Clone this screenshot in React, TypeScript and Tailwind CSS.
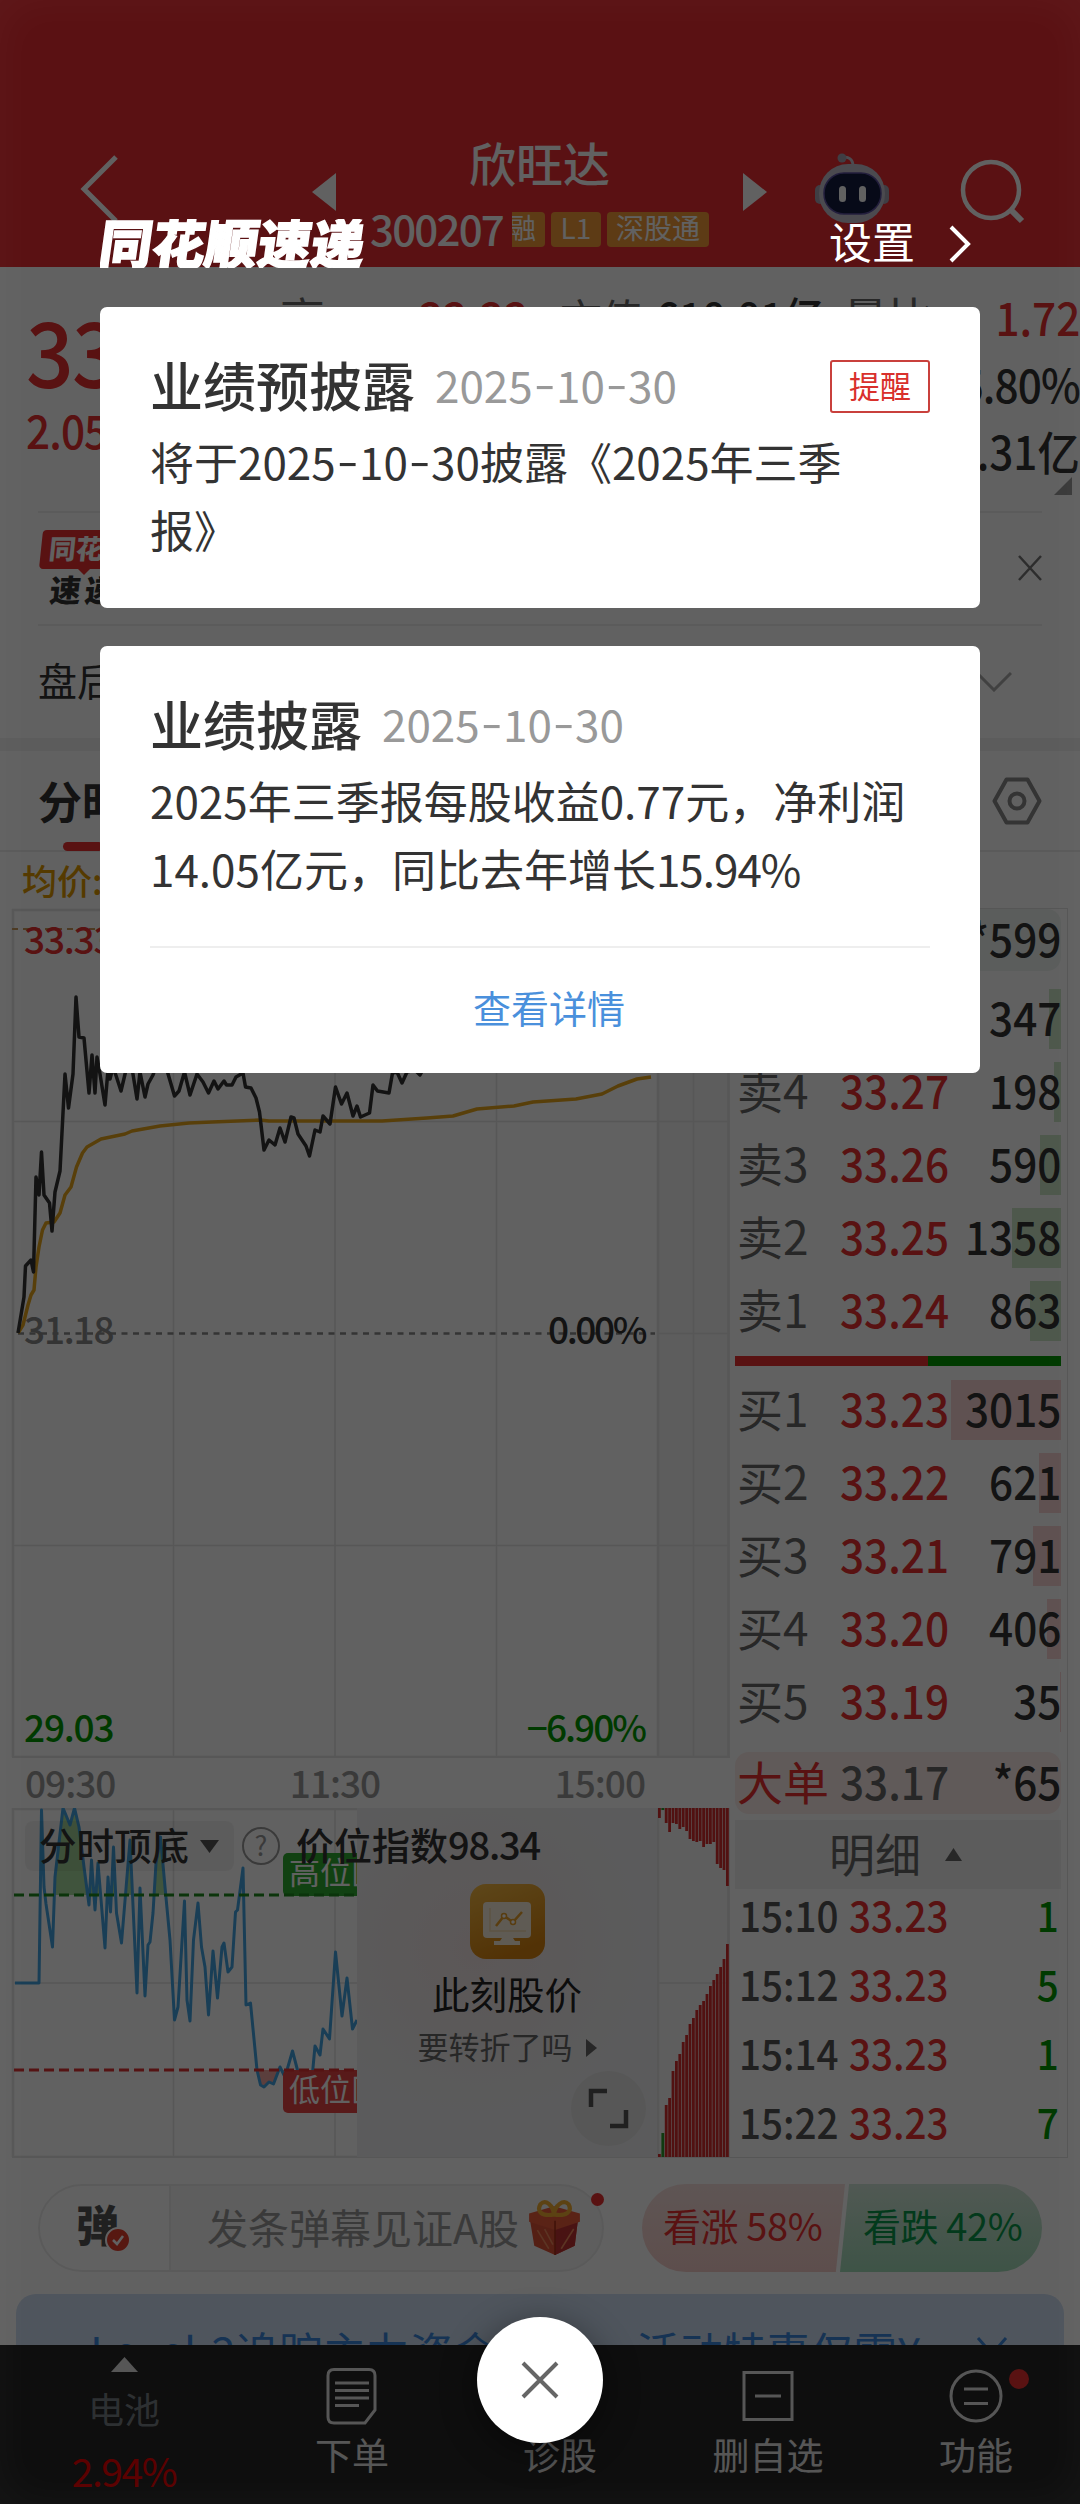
import { Fragment } from 'react';
import type { ReactNode } from 'react';
import clsx from 'clsx';

type Quote = { label: string; price: string; volume: string; bar: number };

const sells: Quote[] = [
  { label: '卖5', price: '33.28', volume: '347', bar: 12 },
  { label: '卖4', price: '33.27', volume: '198', bar: 7 },
  { label: '卖3', price: '33.26', volume: '590', bar: 21 },
  { label: '卖2', price: '33.25', volume: '1358', bar: 49 },
  { label: '卖1', price: '33.24', volume: '863', bar: 31 },
];

const buys: Quote[] = [
  { label: '买1', price: '33.23', volume: '3015', bar: 110 },
  { label: '买2', price: '33.22', volume: '621', bar: 22 },
  { label: '买3', price: '33.21', volume: '791', bar: 28 },
  { label: '买4', price: '33.20', volume: '406', bar: 14 },
  { label: '买5', price: '33.19', volume: '35', bar: 1 },
];

const ticks = [
  { time: '15:10', price: '33.23', volume: '1' },
  { time: '15:12', price: '33.23', volume: '5' },
  { time: '15:14', price: '33.23', volume: '1' },
  { time: '15:22', price: '33.23', volume: '7' },
];

const priceLine =
  '18,1333 24,1297 25.5,1266 31,1260 33.5,1272 36,1177 39,1195 41.5,1152 44,1195 49.5,1203 52,1231 55,1192 60,1171 63,1113 65,1074 68.5,1108 73,1074 76,997 79,1037 84,1038 89,1093 92,1055 95,1093 97,1057 100,1074 105,1105 108,1070 110,1079 113,1067 116.5,1077 121,1091 126,1070 132,1068 137,1099 140,1072 145,1097 148,1084 153,1075 158,1060 167.5,1072 174.5,1096 179,1091 184.5,1072 190,1095 197,1074 203,1082 208.5,1093 214,1081 218,1089 224,1081 226.5,1085 232,1085 236,1077 243,1073 245.5,1087 251,1088 256,1098 259.5,1112 264,1150 269,1140 275,1145 280,1128 285,1142 291,1117 294,1118 298,1134 306,1146 309.5,1156 315,1130 320,1132 323,1116 330,1124 335.5,1087 341.5,1104 347,1093 353,1116 357,1106 360.5,1117 369.5,1113 373,1085 377.5,1091 389,1093 392.5,1073 397,1072 402,1083 407,1072 415,1070 420,1075 425,1066';

const averageLine =
  '18,1333 23,1325 25.5,1315 28,1305 31,1295 34,1290 36,1267 39,1247 42.5,1230 46,1223 54,1222 60,1213 65,1195 71,1187 76.5,1167 82.5,1153 87,1147 101,1139 125,1134 132,1131 160,1126 189,1123 212,1122 260,1120 269,1121 382,1121 427,1118 453,1116 477,1109 514,1106 533,1102 576,1099 602,1094 618,1086 637,1079 651,1077';

const indexLine =
  '15,1983 39,1983 41.5,1810 44,1887 46,1904 52.5,1947 55,1877 63,1808 70,1825 74.5,1808 79,1827 84,1867 89,1905 91.5,1860 95,1910 98,1863 105,1948 108,1877 110.5,1912 113.5,1847 116.5,1913 121.5,1943 130,1840 137,1993 140,1888 145,1996 148,1945 150,1942 153,1913 156,1863 160.5,1837 165,1887 170,1940 174.5,2020 178,2007 184.5,1901 187,2000 190,2021 193.5,1940 198,1903 201.5,1947 205,1967 208.5,2015 213,1951 217.5,1998 222,1947 224,1943 228,1972 232,1967 235.5,1912 237.5,1910 243,1868 246,2005 250.5,2003 257,2070 260.5,2085 264,2087 269,2082 273.5,2084 280,2067 285,2077 292.5,2051 298,2072 307,2080 312.5,2073 315,2046 320,2055 323,2029 329.5,2039 335.5,1952 342,2016 347,1978 352.5,2029 357,2020';

const upperBars = [10, 2, 15, 24, 15, 16, 21, 19, 23, 31, 33, 34, 33, 39, 36, 36, 34, 56, 60, 62, 78];
const lowerBars = [3, 24, 52, 59, 86, 96, 103, 115, 122, 133, 139, 147, 152, 156, 163, 171, 177, 183, 190, 198, 213];

// Condensed figures for prices and volumes
function Num({ className, right, children }: { className?: string; right?: boolean; children: ReactNode }) {
  return (
    <span className={clsx('inline-block scale-x-[0.92] font-medium', right ? 'origin-right' : 'origin-left', className)}>
      {children}
    </span>
  );
}

// --- Header ---

function Robot() {
  return (
    <svg width="76" height="70" viewBox="0 0 76 70" className="mt-[13px] ml-[47px] shrink-0">
      <path d="M28 5C34 3 39 6 39 13" fill="none" stroke="#c9c6d2" strokeWidth="3" />
      <circle cx="28" cy="5" r="4.5" fill="#a5a2b4" />
      <rect x="1" y="32" width="10" height="19" rx="5" fill="#a5a2b4" />
      <rect x="65" y="32" width="10" height="19" rx="5" fill="#a5a2b4" />
      <rect x="5" y="11" width="66" height="59" rx="29" fill="#c4c2d0" />
      <rect x="10" y="20" width="57" height="41" rx="20" fill="#141c40" stroke="#5c50a0" strokeWidth="1.5" />
      <rect x="25" y="33" width="7" height="16" rx="3.5" fill="#fff" />
      <rect x="45" y="33" width="7" height="16" rx="3.5" fill="#fff" />
    </svg>
  );
}

function Header() {
  return (
    <header className="flex h-[267px] items-start bg-[#ec2d34] pt-[140px] text-white">
      <svg width="40" height="68" viewBox="0 0 40 68" className="mt-[15px] ml-[79px] shrink-0">
        <path d="M37 2L5 34L37 66" fill="none" stroke="#fff" strokeWidth="5" />
      </svg>
      <svg width="24" height="38" viewBox="0 0 24 38" className="mt-[33px] ml-[193px] shrink-0">
        <path d="M24 0V38L0 19Z" fill="#fff" />
      </svg>
      <div className="flex w-[407px] shrink-0 flex-col items-center">
        <h1 className="text-[47px] leading-[44px] font-medium">欣旺达</h1>
        <div className="mt-[28px] flex h-[35px] items-center gap-[6px] text-[28px]">
          <span className="-mt-[5px] mr-[3px] text-[42px] leading-[35px] font-medium tracking-[-1.8px]">300207</span>
          <span className="flex h-[35px] w-[33px] justify-end overflow-hidden rounded-r-[4px] bg-[#f49b38] pr-[9px] leading-[31px]">融</span>
          <span className="h-[35px] w-[50px] rounded-[4px] bg-[#f49b38] text-center leading-[31px]">L1</span>
          <span className="h-[35px] w-[102px] rounded-[4px] bg-[#f49b38] text-center leading-[31px]">深股通</span>
        </div>
      </div>
      <svg width="24" height="38" viewBox="0 0 24 38" className="mt-[33px] shrink-0">
        <path d="M0 0V38L24 19Z" fill="#fff" />
      </svg>
      <Robot />
      <svg width="66" height="66" viewBox="0 0 66 66" className="mt-[19px] ml-[69px] shrink-0" fill="none" stroke="#fff" strokeWidth="4.5">
        <circle cx="32" cy="31" r="28" />
        <path d="M51 50L63 62" strokeWidth="6" />
      </svg>
    </header>
  );
}

// --- Price summary ---

function Summary() {
  return (
    <section className="flex h-[244px] text-[46px] leading-[67px]">
      <div className="w-[280px] pl-[26px] text-[#e93030]">
        <div className="mt-[34px] text-[91px] leading-[94px] tracking-[-2px]">
          <Num>33.23</Num>
        </div>
        <div className="mt-[1px] tracking-[-1px]">
          <Num>2.05 6.57%</Num>
        </div>
      </div>
      <div className="flex-1 pt-[16px] text-[#333]">
        <div className="flex">
          <span className="w-[139px] text-[45px] text-[#666]">高</span>
          <Num className="w-[141px] text-[#e93030]">33.33</Num>
          <span className="w-[96px] text-[42px] tracking-[-1.5px] text-[#666]">市值</span>
          <Num className="w-[187px] text-[44px] whitespace-nowrap">618.81亿</Num>
          <span className="flex-1 text-[45px] text-[#666]">量比</span>
          <Num right className="text-[#e93030]">1.72</Num>
        </div>
        <div className="text-right">
          <Num right className="tracking-[-1px]">15.80%</Num>
        </div>
        <div className="text-right">
          <Num right>614.31亿</Num>
        </div>
        <svg width="18" height="18" viewBox="0 0 18 18" className="-mt-[7px] mr-[8px] ml-auto">
          <path d="M18 0V18H0Z" fill="#999" />
        </svg>
      </div>
    </section>
  );
}

function NewsStrip() {
  return (
    <section className="mx-[38px]">
      <div className="flex h-[113px] items-start justify-between border-t-2 border-[#efefef] pt-[17px]">
        <div className="flex flex-col items-start">
          <div className="ml-[3px] h-[39px] w-[120px] -skew-x-6 rounded-[4px] bg-[#e93030] pl-[8px] text-[27px] leading-[36px] font-black text-white">同花顺</div>
          <svg width="12" height="6" viewBox="0 0 12 6" className="ml-[40px]">
            <path d="M0 0H12L6 6Z" fill="#e93030" />
          </svg>
          <div className="-skew-x-6 pl-[12px] text-[31px] leading-[28px] font-black tracking-[4px] text-[#333]">速递</div>
        </div>
        <svg width="24" height="26" viewBox="0 0 24 26" className="mt-[25px]">
          <path d="M1 1L23 25M23 1L1 25" stroke="#777" strokeWidth="2.5" />
        </svg>
      </div>
      <div className="flex h-[114px] items-center justify-between border-t-2 border-[#efefef] pr-[30px]">
        <span className="pb-[6px] text-[39px] text-[#333]">盘后</span>
        <svg width="36" height="20" viewBox="0 0 36 20">
          <path d="M1 1L18 18L35 1" fill="none" stroke="#aaa" strokeWidth="3" />
        </svg>
      </div>
    </section>
  );
}

function ChartTabs() {
  return (
    <>
      <section className="flex h-[101px] items-start justify-between border-b-2 border-[#ececec] pr-[38px] pl-[38px]">
        <div className="flex flex-col">
          <span className="mt-[24px] text-[44px] leading-[50px] font-bold text-[#333]">分时</span>
          <span className="mt-[17px] ml-[25px] h-[9px] w-[40px] rounded-full bg-[#e93030]" />
        </div>
        <svg width="50" height="48" viewBox="0 0 50 48" className="mt-[26px]" fill="none" stroke="#888" strokeWidth="4">
          <path d="M14.5 2.5H35.5L47.5 24L35.5 45.5H14.5L2.5 24Z" strokeLinejoin="round" />
          <circle cx="25" cy="24" r="7.5" />
        </svg>
      </section>
      <div className="h-[56px] pl-[22px] text-[35px] leading-[56px] font-medium text-[#e09a00]">均价:32.16</div>
    </>
  );
}

// --- Charts ---

function PriceChart() {
  return (
    <svg width="730" height="850" viewBox="0 908 730 850" className="block">
      <rect x="657" y="909" width="73" height="848" fill="#f3f3f3" />
      <g stroke="#e4e4e4" strokeWidth="1.5">
        <path d="M173.5 910V1757M335 910V1757M496.5 910V1757M693.5 910V1757" />
        <path d="M12 1121.5H730M12 1545.5H730M657 1333.5H730" />
        <path d="M13 909V1757M658 909V1757M728.5 909V1757M12 910H730M12 1757H730" strokeWidth="2.5" />
      </g>
      <path d="M12 929H650" stroke="#c79a5e" strokeWidth="2" strokeDasharray="6 5" />
      <path d="M18 1333.5H655" stroke="#888" strokeWidth="2.5" strokeDasharray="6 5.5" />
      <polyline points={averageLine} fill="none" stroke="#e8a51c" strokeWidth="3.5" strokeLinejoin="round" />
      <polyline points={priceLine} fill="none" stroke="#333" strokeWidth="3.5" strokeLinejoin="round" />
      <g fontSize="37" fontWeight="500" letterSpacing="-1.2">
        <text x="24" y="954" fill="#e93030">33.33</text>
        <text x="24" y="1344" fill="#888">31.18</text>
        <text x="24" y="1742" fill="#090">29.03</text>
        <text x="645" y="1344" fill="#333" textAnchor="end" letterSpacing="-2.4">0.00%</text>
        <text x="645" y="1742" fill="#090" textAnchor="end" letterSpacing="-2">−6.90%</text>
      </g>
    </svg>
  );
}

function IndexChart() {
  return (
    <div className="relative h-[350px]">
      <svg width="730" height="350" viewBox="0 1808 730 350" className="block">
        <defs>
          <clipPath id="above"><rect x="50" y="1808" width="120" height="87" /></clipPath>
          <clipPath id="below"><rect x="12" y="2070" width="345" height="87" /></clipPath>
        </defs>
        <rect x="657" y="1808" width="73" height="349" fill="#f6f6f6" />
        <g stroke="#e4e4e4" strokeWidth="1.5">
          <path d="M173.5 1808V2157M335 1808V2157M12 1983H730" />
          <path d="M13 1808V2157M658 1808V2157M728.5 1808V2157M12 1809H730M12 2157H730" strokeWidth="2.5" />
        </g>
        <polygon points={`15,1895 ${indexLine} 357,1895`} fill="#a9dca0" clipPath="url(#above)" />
        <polygon points={`15,2070 ${indexLine} 357,2070`} fill="#f0a5a0" clipPath="url(#below)" />
        <polyline points={indexLine} fill="none" stroke="#42a4e2" strokeWidth="3" strokeLinejoin="round" />
        <rect x="283" y="1853" width="84" height="43" rx="5" fill="#2dab30" />
        <rect x="283" y="2070" width="84" height="43" rx="5" fill="#e84444" />
        <path d="M14 1895H357" stroke="#1d8a1d" strokeWidth="3" strokeDasharray="10 5" />
        <path d="M14 2070H357" stroke="#e03434" strokeWidth="3" strokeDasharray="10 5" />
        <g fontSize="31" fill="#fff">
          <text x="289" y="1884">高位区</text>
          <text x="289" y="2101">低位区</text>
        </g>
        {upperBars.map((h, i) => (
          <Fragment key={i}>
            <rect x={658 + i * 3.4} y="1808" width="2.8" height={h} fill={i === 1 ? '#2c9a2c' : '#d62e2e'} />
            <rect x={658 + i * 3.4} y={2157 - lowerBars[i]} width="2.8" height={lowerBars[i]} fill={i === 1 ? '#2c9a2c' : '#d62e2e'} />
          </Fragment>
        ))}
      </svg>

      <div className="absolute top-0 left-[357px] flex h-[349px] w-[300px] flex-col items-center bg-[radial-gradient(circle_at_40%_40%,#f1e4e4,#eff0f1_60%)]">
        <svg width="75" height="75" viewBox="0 0 75 75" className="mt-[76px]">
          <defs>
            <linearGradient id="gold" x1="0" y1="0" x2="0.4" y2="1">
              <stop offset="0" stopColor="#f6bb45" />
              <stop offset="1" stopColor="#d88410" />
            </linearGradient>
          </defs>
          <rect width="75" height="75" rx="16" fill="url(#gold)" />
          <rect x="13" y="18" width="48" height="36" rx="4" fill="#f9efdc" />
          <path d="M20 24V47H56" fill="none" stroke="#f3dcae" strokeWidth="1.5" />
          <path d="M26 42L34 32L43 38L52 28" fill="none" stroke="#e9a02a" strokeWidth="2.5" />
          <circle cx="34" cy="32" r="2.5" fill="#fff" stroke="#e9a02a" strokeWidth="1.5" />
          <circle cx="43" cy="38" r="2.5" fill="#fff" stroke="#e9a02a" strokeWidth="1.5" />
          <path d="M32 54H43L45 57H50V61H24V57H30Z" fill="#f9efdc" />
        </svg>
        <span className="mt-[8px] text-[37.5px] leading-[52px] text-[#222]">此刻股价</span>
        <span className="mt-[4px] flex items-center gap-[13px] text-[31px] leading-[46px] text-[#666]">
          要转折了吗
          <svg width="11" height="18" viewBox="0 0 11 18" className="mt-[4px]">
            <path d="M0 0L11 9L0 18Z" fill="#666" />
          </svg>
        </span>
      </div>

      <svg width="75" height="75" viewBox="0 0 75 75" className="absolute top-[263px] left-[571px]">
        <circle cx="37.5" cy="37.5" r="37.5" fill="#e4e4e4" />
        <path d="M20 36V20H36M55 39V55H39" fill="none" stroke="#555" strokeWidth="4.5" />
      </svg>

      <div className="absolute top-[13px] left-[25px] flex h-[50px] items-center text-[#333]">
        <div className="flex h-[50px] w-[209px] items-center rounded-[8px] bg-black/5 pl-[14px]">
          <span className="pb-[5px] text-[37.5px] leading-[45px] font-medium">分时顶底</span>
          <svg width="19" height="13" viewBox="0 0 19 13" className="ml-[11px]">
            <path d="M0 0H19L9.5 13Z" fill="#555" />
          </svg>
        </div>
        <span className="ml-[8px] flex size-[38px] items-center justify-center rounded-full border-[2.5px] border-[#999] pb-[3px] text-[27px] leading-none text-[#999]">?</span>
        <span className="ml-[16px] pb-[5px] text-[38px] leading-[45px] font-medium">
          价位指数<span className="tracking-[-1.2px]">98.34</span>
        </span>
      </div>
    </div>
  );
}

// --- Order book ---

function QuoteRow({ quote, side }: { quote: Quote; side: 'buy' | 'sell' }) {
  const color = side === 'buy' ? '#fad6d6' : '#cde6c8';
  return (
    <div className="flex h-[73px] items-center">
      <div
        className="flex h-[60px] w-full items-start text-[46px] leading-[54px]"
        style={{ backgroundImage: `linear-gradient(to left, ${color} ${quote.bar}px, transparent ${quote.bar}px)` }}
      >
        <span className="w-[105px] pl-[2px] text-[46px] text-[#666]">{quote.label}</span>
        <Num className="text-[#e93030]">{quote.price}</Num>
        <Num right className="-ml-[16px] flex-1 text-right text-[#333]">{quote.volume}</Num>
      </div>
    </div>
  );
}

function BigOrder({ className, price, volume }: { className: string; price: string; volume: string }) {
  return (
    <div className={clsx('flex h-[62px] rounded-[14px] text-[46px] leading-[56px]', className)}>
      <span className="w-[105px] pl-[2px] text-[#e93030]">大单</span>
      <Num className="text-[#666]">{price}</Num>
      <Num right className="flex-1 text-right text-[#333]">{volume}</Num>
    </div>
  );
}

function OrderBook() {
  return (
    <div className="h-[1250px] w-[338px] border border-l-0 border-[#e2e2e2] pr-[6px] pl-[5px]">
      <BigOrder className="bg-[#eff5f1]" price="33.38" volume="*599" />
      <div className="mt-[11px]">
        {sells.map((q) => (
          <QuoteRow key={q.label} quote={q} side="sell" />
        ))}
      </div>
      <div className="mt-[9px] flex h-[10px]">
        <div className="w-[193px] bg-[#e93030]" />
        <div className="flex-1 bg-[#090]" />
      </div>
      <div className="mt-[7px]">
        {buys.map((q) => (
          <QuoteRow key={q.label} quote={q} side="buy" />
        ))}
      </div>
      <BigOrder className="mt-[14px] bg-[#fcecea]" price="33.17" volume="*65" />
      <div className="mt-[6px] flex h-[69px] items-center bg-[#f1f1f1] pl-[94px] text-[46px] text-[#666]">
        <span className="pb-[5px]">明细</span>
        <svg width="17" height="13" viewBox="0 0 17 13" className="ml-[24px]">
          <path d="M8.5 0L17 13H0Z" fill="#666" />
        </svg>
      </div>
      <div>
        {ticks.map((t) => (
          <div key={t.time} className="flex h-[69px] pl-[4px] text-[42px] leading-[49px]">
            <Num className="w-[110px] text-[#555]">{t.time}</Num>
            <Num className="text-[#e93030]">{t.price}</Num>
            <Num right className="flex-1 pr-[2px] text-right text-[#090]">{t.volume}</Num>
          </div>
        ))}
      </div>
    </div>
  );
}

// --- Danmu bar and banner ---

function Gift() {
  return (
    <svg width="53" height="56" viewBox="0 0 51 54" className="ml-[9px] shrink-0">
      <path d="M2 20L26 27L48 20L45 44L26 53L6 44Z" fill="#de5136" />
      <path d="M26 27L48 20L45 44L26 53Z" fill="#c03434" />
      <path d="M1 13L25 6L50 13V21L26 29L1 21Z" fill="#ec5c3c" />
      <path d="M26 20V53" stroke="#a83018" strokeWidth="1.5" />
      <path d="M9 29L20 47M16 28L24 43M44 28L32 47" stroke="#f08a5c" strokeWidth="1.5" />
      <path d="M25 14C13 16 8 11 12 4C17 -1 24 5 25 14C26 5 34 -1 39 4C43 11 37 16 25 14Z" fill="none" stroke="#f2ae34" strokeWidth="4" />
    </svg>
  );
}

function DanmuBar() {
  return (
    <section className="flex h-[136px] items-start px-[38px] pt-[26px]">
      <div className="relative flex h-[88px] w-[566px] rounded-full border-2 border-[#ededed] bg-[#f6f6f6]">
        <div className="relative w-[131px] rounded-l-full border-r-2 border-[#ededed] bg-white pl-[36px] text-[43px] leading-[75px] font-black text-[#555]">
          弹
          <svg width="26" height="26" viewBox="0 0 26 26" className="absolute top-[41px] left-[65px]">
            <circle cx="13" cy="13" r="12" fill="#e5412f" stroke="#fff" strokeWidth="2" />
            <path d="M8 13L12 17L18 9" fill="none" stroke="#fff" strokeWidth="2.5" />
          </svg>
        </div>
        <div className="flex flex-1 items-center pl-[36px]">
          <span className="pb-[5px] text-[41px] leading-[50px] whitespace-nowrap text-[#999]">发条弹幕见证A股</span>
          <Gift />
        </div>
        <span className="absolute top-[7px] right-[-2px] size-[13px] rounded-full bg-[#e93030]" />
      </div>
      <div className="ml-[38px] flex h-[88px] text-[38px] leading-[82px] whitespace-nowrap">
        <div className="w-[203px] rounded-l-full bg-linear-to-b from-[#f8e0dd] to-[#f5cdc9] pl-[21px] tracking-[-0.4px] text-[#e93030] [clip-path:polygon(0_0,100%_0,95.5%_100%,0_100%)]">看涨 58%</div>
        <div className="-ml-[5px] w-[202px] rounded-r-full bg-linear-to-b from-[#d3e8da] to-[#a3dcba] pl-[23px] tracking-[-0.4px] text-[#08984a] [clip-path:polygon(4.5%_0,100%_0,100%_100%,0_100%)]">看跌 42%</div>
      </div>
    </section>
  );
}

function Banner() {
  return (
    <section className="mx-[16px] flex h-[51px] overflow-hidden rounded-t-[20px] bg-[#cfdff3] pt-[24px] pl-[74px] text-[43.5px] leading-[66px] whitespace-nowrap text-[#3b87dc]">
      <span className="w-[546px]">Level-2追踪主力资金</span>
      <span className="w-[340px]">活动特惠仅需¥</span>
      <svg width="32" height="36" viewBox="0 0 32 36" className="mt-[18px]">
        <path d="M2 2L30 34M30 2L2 34" stroke="#3b87dc" strokeWidth="3" />
      </svg>
    </section>
  );
}

function NavItem({ label, children }: { label: string; children: ReactNode }) {
  return (
    <div className="flex w-[208px] flex-col items-center pt-[22px]">
      <svg width="60" height="58" viewBox="0 0 60 58" fill="none" stroke="#e2e2e2" strokeWidth="3">
        {children}
      </svg>
      <span className="mt-[5px] text-[37px] leading-[48px] text-[#e2e2e2]">{label}</span>
    </div>
  );
}

function BottomNav() {
  return (
    <nav className="flex h-[159px] bg-[#252525]">
      <div className="flex w-[248px] flex-col items-center pt-[12px]">
        <svg width="27" height="15" viewBox="0 0 27 15">
          <path d="M13.5 0L27 15H0Z" fill="#e2e2e2" />
        </svg>
        <span className="mt-[14px] text-[36px] leading-[44px] text-[#767e84]">电池</span>
        <span className="mt-[20px] text-[39px] leading-[40px] tracking-[-1.4px] text-[#f00000]">2.94%</span>
      </div>
      <NavItem label="下单">
        <path d="M12 2.5H47Q53 2.5 53 8.5V43L43 56H12Q6 56 6 50V8.5Q6 2.5 12 2.5ZM13 16H47M13 23.5H47M13 31H47M13 38.5H37" />
      </NavItem>
      <NavItem label="诊股">
        <circle cx="30" cy="29" r="26" />
      </NavItem>
      <NavItem label="删自选">
        <path d="M6 5.5H54V52.5H6ZM17 29H43" />
      </NavItem>
      <div className="relative">
        <NavItem label="功能">
          <circle cx="30" cy="29" r="25" />
          <path d="M18 22H42M18 36.5H42" />
        </NavItem>
        <span className="absolute top-[24px] right-[51px] size-[20px] rounded-full bg-[#e93030]" />
      </div>
    </nav>
  );
}

// --- Popup ---

// Date with wider dashes than the font's own
function DateText({ value }: { value: string }) {
  return (
    <>
      {value.split('-').map((part, i) => (
        <Fragment key={i}>
          {i > 0 && <span className="mx-[4px] inline-block -translate-y-[3px] scale-x-[1.4]">-</span>}
          {part}
        </Fragment>
      ))}
    </>
  );
}

function CardTitle({ title, date }: { title: string; date: string }) {
  return (
    <div className="flex items-center gap-[20px]">
      <h2 className="text-[53px] leading-[60px] font-medium text-[#333]">{title}</h2>
      <span className="text-[44px] leading-[60px] text-[#999]">
        <DateText value={date} />
      </span>
    </div>
  );
}

function Popup() {
  return (
    <div className="absolute inset-x-0 top-[219px] px-[100px]">
      <div className="flex h-[49px] justify-between overflow-hidden text-white">
        <span className="-skew-x-8 text-[53px] leading-[44px] font-black [-webkit-text-stroke:1.5px_#fff]">同花顺速递</span>
        <span className="mr-[8px] flex items-start text-[43px] leading-[43px]">
          设置
          <svg width="24" height="40" viewBox="0 0 24 40" className="mt-[5px] ml-[33px]">
            <path d="M3 3L20 20L3 37" fill="none" stroke="#fff" strokeWidth="4" />
          </svg>
        </span>
      </div>
      <div className="mt-[39px] h-[301px] rounded-[7px] bg-white px-[50px] pt-[47px]">
        <div className="flex items-center justify-between">
          <CardTitle title="业绩预披露" date="2025-10-30" />
          <span className="mt-[4px] h-[53px] w-[100px] rounded-[3px] border-2 border-[#c9403c] text-center text-[31px] leading-[45px] text-[#d9302c]">提醒</span>
        </div>
        <p className="mt-[13px] text-[44px] leading-[68px] text-[#333]">
          将于
          <DateText value="2025-10-30" />
          披露《2025年三季
          <br />
          报》
        </p>
      </div>
      <div className="mt-[38px] h-[427px] rounded-[7px] bg-white px-[50px] pt-[47px]">
        <CardTitle title="业绩披露" date="2025-10-30" />
        <p className="mt-[13px] text-[44px] leading-[68px] text-[#333]">
          2025年三季报每股收益0.77元，净利润
          <br />
          14.05亿元，同比去年增长<span className="tracking-[-1px]">15.94%</span>
        </p>
        <div className="mt-[44px] border-t-2 border-[#eee] pt-[34px] pl-[18px] text-center text-[38px] leading-[50px] text-[#4a90dc]">查看详情</div>
      </div>
    </div>
  );
}

export default function App() {
  return (
    <div className="relative h-[2504px] w-[1080px] overflow-hidden bg-white font-['Noto_Sans_CJK_SC','Noto_Sans',sans-serif]">
      <Header />
      <Summary />
      <NewsStrip />
      <div className="h-[13px] bg-[#f1f1f1]" />
      <ChartTabs />
      <div className="flex">
        <div className="w-[730px]">
          <PriceChart />
          <div className="flex h-[50px] justify-between pr-[85px] pl-[25px] text-[37px] leading-[49px] font-medium tracking-[-1px] text-[#999]">
            <span>09:30</span>
            <span>11:30</span>
            <span>15:00</span>
          </div>
          <IndexChart />
        </div>
        <OrderBook />
      </div>
      <DanmuBar />
      <Banner />
      <BottomNav />

      <div className="absolute inset-0 bg-black/62 shadow-[inset_0_0_50px_rgba(255,255,255,0.04)]" />
      <Popup />
      <button className="absolute top-[2317px] left-[477px] flex size-[126px] items-center justify-center rounded-full bg-white shadow-[0_8px_36px_rgba(0,0,0,0.45)]">
        <svg width="40" height="40" viewBox="0 0 40 40">
          <path d="M3 3L37 37M37 3L3 37" stroke="#666" strokeWidth="4" />
        </svg>
      </button>
    </div>
  );
}
